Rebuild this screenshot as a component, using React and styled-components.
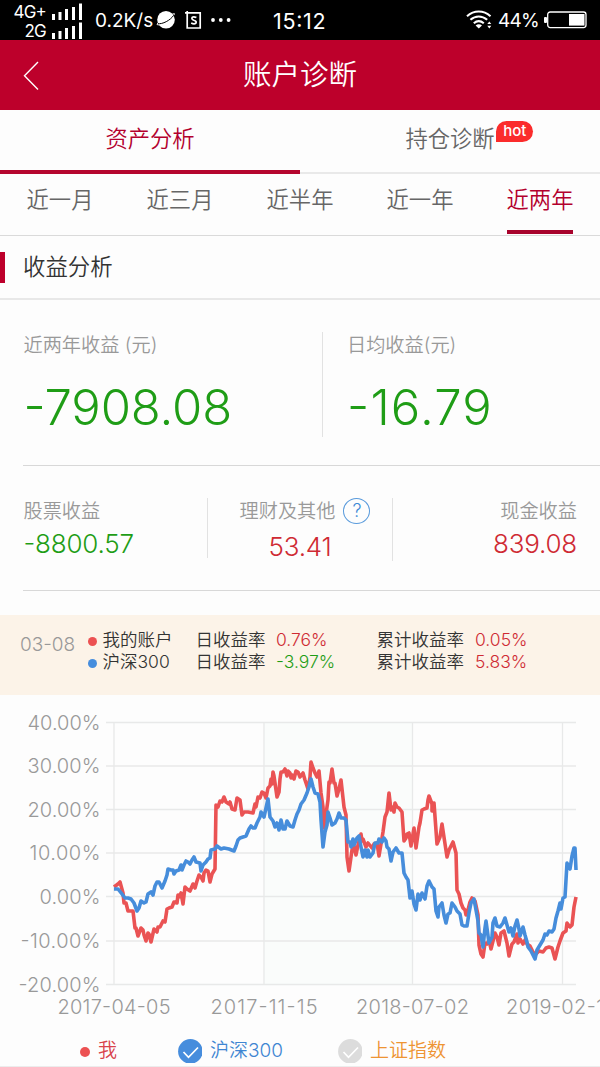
import React from 'react';
import styled, { createGlobalStyle } from 'styled-components';

const GlobalStyle = createGlobalStyle`
  * {
    box-sizing: border-box;
  }

  body {
    margin: 0;
    background: #fdfdfd;
    font-family: Inter, 'Noto Sans CJK SC', sans-serif;
    font-weight: 350;
    font-feature-settings: 'case';
    color: #333;
  }
`;

const GREEN = '#1f9d16';
const RED = '#cf2a33';

const Page = styled.div`
  width: 600px;
  height: 1067px;
  overflow: hidden;
  display: flex;
  flex-direction: column;
  white-space: nowrap;
`;

const StatusBar = styled.header`
  flex: none;
  height: 40px;
  display: grid;
  grid-template-columns: 273px 1fr auto;
  align-items: center;
  padding: 0 13px 0 0;
  background: #000;
  color: #fff;
  font-weight: 400;
`;

const StatusGroup = styled.div`
  display: flex;
  align-items: center;
`;

const StatusIcons = styled(StatusGroup)`
  gap: 9px;
`;

const Signals = styled.div`
  display: flex;
  flex-direction: column;
  width: 82px;
  padding-top: 2px;
`;

const SignalRow = styled.div`
  display: flex;
  justify-content: flex-end;
  align-items: center;
  gap: 6px;
  height: 19px;
  font-size: 17px;
  letter-spacing: -0.8px;
`;

const Speed = styled.span`
  margin: 0 3px 0 13px;
  padding-top: 1px;
  font-size: 19px;
`;

const Clock = styled.span`
  padding-top: 1px;
  font-size: 21.5px;
  letter-spacing: 0.7px;
`;

const Battery = styled.span`
  margin: 0 5px 0 6px;
  padding-top: 1px;
  font-size: 19px;
  letter-spacing: -0.7px;
`;

const TitleBar = styled.div`
  flex: none;
  height: 70px;
  display: grid;
  grid-template-columns: 60px 1fr 60px;
  align-items: center;
  background: #bd002b;
  color: #fff;
`;

const BackIcon = styled.svg`
  margin: 2px 0 0 23px;
`;

const Title = styled.h1`
  margin: 0;
  font-size: 28.5px;
  font-weight: 350;
  line-height: 40px;
  text-align: center;
  padding-bottom: 1px;
`;

const Tabs = styled.nav`
  flex: none;
  display: grid;
  grid-template-columns: 1fr 1fr;
  height: 64px;
`;

const Tab = styled.div`
  display: flex;
  justify-content: center;
  padding-top: 13px;
  font-size: 22.3px;
  line-height: 32px;
  color: ${props => (props.$active ? '#b3002d' : '#666')};
  border-bottom: ${props => (props.$active ? '4px solid #b5062e' : '2px solid #e9e9e9')};
`;

const TabLabel = styled.span`
  position: relative;
`;

const HotBadge = styled.span`
  position: absolute;
  left: 91px;
  top: -2px;
  width: 37px;
  height: 21px;
  border-radius: 11px 11px 11px 0;
  background: #fb2c2c;
  color: #fff;
  font: 500 15px/20px Inter, sans-serif;
  text-align: center;
`;

const Periods = styled.nav`
  flex: none;
  display: grid;
  grid-template-columns: repeat(5, 120px);
  height: 62px;
  border-bottom: 1px solid #dadada;
`;

const Period = styled.div`
  justify-self: center;
  height: 60px;
  padding-top: 10px;
  font-size: 22.3px;
  line-height: 32px;
  color: ${props => (props.$active ? '#b3002d' : '#666')};
  border-bottom: ${props => (props.$active ? '4px solid #a8032c' : '0')};
`;

const SectionTitle = styled.h2`
  flex: none;
  margin: 0;
  display: flex;
  align-items: center;
  gap: 18px;
  height: 64px;
  border-bottom: 2px solid #e8e8e8;
  font-size: 22.4px;
  line-height: 32px;
  font-weight: 350;

  &::before {
    content: '';
    width: 5px;
    height: 31px;
    background: #bd002b;
  }
`;

const Totals = styled.section`
  flex: none;
  display: grid;
  grid-template-columns: 299px 1fr;
  height: 166px;
  margin-left: 23px;
  padding-top: 32px;
  border-bottom: 1px solid #d8d8d8;
`;

const Total = styled.div`
  height: 105px;
  padding-left: ${props => (props.$divided ? '24px' : '0.5px')};
  border-left: ${props => (props.$divided ? '1px solid #e2e2e2' : '0')};
`;

const Label = styled.div`
  display: flex;
  align-items: center;
  font-size: 19.2px;
  line-height: 24px;
  height: 24px;
  padding-top: 2px;
  padding-left: ${props => props.$indent || '0'};
  color: #999;
`;

const TotalValue = styled.div`
  margin-top: 22px;
  font-size: 49px;
  line-height: 60px;
  letter-spacing: ${props => props.$spacing};
  color: ${GREEN};
`;

const Breakdown = styled.section`
  flex: none;
  display: grid;
  grid-template-columns: 185px 185px 1fr;
  height: 125px;
  margin-left: 23px;
  padding-top: 32px;
  border-bottom: 1px solid #d8d8d8;
`;

const Part = styled.div`
  display: flex;
  flex-direction: column;
  align-items: ${props => props.$align || 'flex-start'};
  height: ${props => props.$height || '60px'};
  padding: ${props => props.$padding || '0 0 0 0.5px'};
  border-right: ${props => (props.$last ? '0' : '1px solid #e2e2e2')};
`;

const PartValue = styled.div`
  margin-top: ${props => props.$top || '7px'};
  font-size: 26px;
  line-height: 30px;
  letter-spacing: -0.2px;
  color: ${props => props.color};
`;

const Help = styled.span`
  display: flex;
  align-items: center;
  justify-content: center;
  width: 27px;
  height: 26px;
  margin-left: 8px;
  border: 1px solid #5a9bdc;
  border-radius: 50%;
  font-size: 18px;
  color: #3d8ad6;
`;

const Summary = styled.section`
  flex: none;
  display: grid;
  grid-template-columns: 68px 107.5px 80.5px 100.5px 98.5px 1fr;
  grid-auto-rows: 22px;
  height: 80px;
  margin-top: 24px;
  padding: 14px 0 0 20px;
  background: #fcf3e8;
  font-size: 17.5px;
  line-height: 22px;
`;

const SummaryDate = styled.div`
  grid-row: span 2;
  padding-top: 3px;
  font-size: 19px;
  line-height: 26px;
  color: #999;
`;

const SummaryName = styled.div`
  display: flex;
  align-items: center;
  gap: 5.5px;

  &::before {
    content: '';
    width: 9px;
    height: 9px;
    margin-top: 2px;
    border-radius: 50%;
    background: ${props => props.$dot};
  }
`;

const Rate = styled.div`
  color: ${props => props.color};
`;

const Chart = styled.svg`
  flex: none;
  display: block;
  font-size: 20px;
  fill: #999;
`;

const Legend = styled.div`
  flex: none;
  display: flex;
  align-items: center;
  height: 31px;
  padding-left: 80px;
  font-size: 19px;
  line-height: 28px;
`;

const LegendItem = styled.div`
  display: flex;
  align-items: center;
  gap: 8px;
  width: ${props => props.$width};
  color: ${props => props.color};
`;

const LegendText = styled.span`
  padding-top: 1px;
`;

const Dot = styled.i`
  width: 10px;
  height: 10px;
  margin-top: 3px;
  border-radius: 50%;
  background: #ec5152;
`;

const Footer = styled.div`
  flex: none;
  height: 2px;
  border-top: 1px solid #ececec;
`;

const periods = ['近一月', '近三月', '近半年', '近一年', '近两年'];

const rows = [
  { name: '我的账户', dot: '#ec5152', day: '0.76%', dayColor: RED, total: '0.05%' },
  { name: '沪深300', dot: '#468ddd', day: '-3.97%', dayColor: GREEN, total: '5.83%' },
];

// position, label, label width
const yTicks = [
  [722.5, '40.00%', 73],
  [766, '30.00%', 73],
  [809.5, '20.00%', 73],
  [853, '10.00%', 71],
  [896.5, '0.00%', 61],
  [941, '-10.00%', 80],
  [984.5, '-20.00%', 82],
];

const xTicks = [
  [114, '2017-04-05', 113],
  [264, '2017-11-15', 107],
  [412.5, '2018-07-02', 113],
  [562.5, '2019-02-1', 98],
];

const mine = `114,887 118,884 120,882 123,893 124,903 126,903 128,911 133,911 135,928 136,928 138,936
  141,928 143,930 144,935 146,941 148,933 149,934 151,942 154,929 157,932 158,927 160,927 163,921 165,922
  167,909 169,908 172,907 174,902 177,903 178,895 179,897 181,893 183,904 185,887 187,889 190,891 193,884
  195,888 197,881 199,875 201,877 203,881 204,873 206,870 208,871 210,882 212,874 215,869 216,805 218,807
  220,801 222,802 224,797 226,802 229,804 230,802 232,809 235,810 237,798 240,800 242,815 244,812 248,812
  253,813 255,804 256,807 258,797 260,798 262,792 264,793 266,798 268,788 270,786 271,779 272,784 273,772
  274,776 277,797 279,792 280,779 281,772 283,772 285,769 287,776 288,771 290,773 291,778 292,775 294,779
  296,771 298,772 300,777 303,773 305,780 308,789 310,777 311,762 313,768 315,773 317,777 319,771 321,793
  323,807 324,828 328,800 329,782 330,783 332,769 334,783 335,783 337,796 339,789 341,780 344,807 346,815
  347,857 349,871 352,850 354,846 356,855 358,845 361,834 362,841 363,839 366,847 368,843 372,848 374,844
  377,843 379,856 382,838 383,832 385,817 387,812 389,793 391,810 392,807 394,812 395,803 397,807 399,808
  402,812 404,841 406,838 407,834 409,833 411,846 414,828 416,848 419,827 420,823 422,810 424,809 427,808
  428,800 429,796 432,804 432,811 434,803 437,844 440,837 442,824 447,857 449,850 453,842 456,853 457,890
  459,894 461,903 463,908 465,910 466,915 468,910 470,902 472,898 475,901 478,915 479,945 481,954 483,957
  485,943 487,944 489,940 491,949 493,941 495,933 497,937 499,945 501,933 504,931 507,943 509,956 512,944
  514,942 517,934 518,943 520,939 523,944 525,940 527,944 530,946 533,952 535,955 539,951 543,952 546,948
  549,947 552,948 555,959 558,947 560,941 563,933 566,931 567,923 570,927 572,925 574,907 576,897`;

const index300 = `114,889 118,889 122,894 125,898 128,898 131,899 134,903 137,911 139,908 141,901 144,903
  146,902 148,894 151,892 153,895 155,886 157,882 159,882 162,888 165,881 167,875 168,869 171,870 173,870
  174,874 176,871 179,870 181,865 182,870 184,865 186,861 188,862 190,864 192,860 194,857 196,862 200,863
  201,871 203,865 206,862 208,859 210,858 211,850 215,849 217,846 221,849 224,848 229,849 234,851 236,846
  238,840 240,838 243,837 246,836 249,829 251,826 253,828 255,828 257,823 260,817 261,812 264,817 266,808
  268,799 270,817 273,821 275,827 277,823 279,830 281,820 283,829 285,829 287,821 290,826 293,827 295,820
  297,814 299,810 301,804 304,800 307,793 309,787 311,779 313,787 315,793 318,794 320,802 321,820 323,847
  325,832 327,825 328,812 330,818 332,825 335,823 337,819 339,813 341,818 344,818 346,820 348,842 350,842
  351,847 353,839 354,845 357,838 359,836 361,847 363,857 365,850 367,857 368,850 370,857 373,853 375,843
  378,843 379,839 382,842 384,838 386,841 387,847 389,849 391,861 393,852 396,848 399,853 402,853 404,873
  406,877 408,880 410,898 412,891 414,904 416,910 418,894 420,900 422,893 425,899 427,886 429,881 432,887
  434,889 436,911 438,917 439,907 442,903 444,915 446,923 448,914 450,913 452,903 455,907 457,911 460,914
  462,925 464,926 467,926 469,913 471,903 474,899 476,910 478,921 479,933 481,935 483,947 485,928 486,921
  489,943 492,937 493,923 495,918 497,926 500,927 503,923 505,918 507,925 509,932 511,928 513,936 515,926
  517,920 519,929 520,936 523,927 525,935 527,942 528,947 531,951 535,959 537,950 540,945 543,940 545,934
  547,935 549,931 552,932 554,929 556,918 558,911 560,903 561,909 563,898 565,897 567,863 570,869 572,856
  574,848 575,848 576,870`;

const SignalBars = () => (
  <svg width="30" height="17" viewBox="0 0 30 17" fill="#fff">
    <rect x="0" y="11" width="3" height="6" />
    <rect x="6.5" y="9" width="3" height="8" />
    <rect x="13" y="6" width="3" height="11" />
    <rect x="20" y="4" width="3" height="13" />
    <rect x="27" y="0.5" width="3" height="16.5" />
  </svg>
);

const PlanetIcon = () => (
  <svg width="20" height="20" viewBox="0 0 20 20">
    <circle cx="10" cy="9.8" r="8.8" fill="#fff" />
    <path d="M1.4 13.6C6.5 14.6 14.5 10.2 17.8 5.2" fill="none" stroke="#000" strokeWidth="1" />
    <path d="M1.8 13L1 14.6L3.4 15M16.6 4L18.4 3.6L18 5.2" fill="none" stroke="#fff" strokeWidth="0.9" />
  </svg>
);

const FrameIcon = () => (
  <svg width="17" height="20" viewBox="0 0 17 20" fill="none" stroke="#fff" strokeWidth="1.7">
    <path d="M0 2.8H15.2V18H2.2V1" />
    <path d="M11.4 7.6Q8.8 6.4 7.3 7.3Q6 9.2 8.8 10.2Q12.2 11.2 10.8 13.3Q9 14.5 6.2 13" />
  </svg>
);

const MoreIcon = () => (
  <svg width="20" height="4" viewBox="0 0 20 4" fill="#fff">
    <circle cx="2" cy="2" r="1.9" />
    <circle cx="9.8" cy="2" r="1.9" />
    <circle cx="17.6" cy="2" r="1.9" />
  </svg>
);

const WifiIcon = () => (
  <svg width="26" height="20" viewBox="0 0 26 20" fill="none" stroke="#fff" strokeWidth="2.1">
    <path d="M1 6.2C8 0 17.5 0 24.5 6.2" />
    <path d="M4.4 9.8C9.5 5.3 16 5.3 21.2 9.8" />
    <path d="M7.8 13.2C11 10.4 14.5 10.4 17.8 13.2" />
    <path d="M9.6 15.4C11.5 13.8 14 13.8 16 15.4L12.8 18.6Z" fill="#fff" stroke="none" />
    <path d="M21.3 14L23.3 11.6L25.3 14ZM21.3 15.8L23.3 18.4L25.3 15.8Z" fill="#fff" stroke="none" />
  </svg>
);

const BatteryIcon = () => (
  <svg width="43" height="18" viewBox="0 0 43 18">
    <rect x="0" y="6" width="3" height="6" rx="1" fill="#fff" />
    <rect x="3.7" y="1" width="38.3" height="15.6" rx="2.5" fill="none" stroke="#fff" strokeWidth="1.3" />
    <rect x="25" y="3" width="15.5" height="11.6" fill="#fff" />
  </svg>
);

const CheckIcon = ({ fill }) => (
  <svg width="24" height="24" viewBox="0 0 24 24">
    <circle cx="12.4" cy="12.4" r="12.3" fill={fill} />
    <path d="M5.5 13L10.5 18.3L20 8.5" fill="none" stroke="#fff" strokeWidth="1.7" />
  </svg>
);

const ReturnChart = () => (
  <Chart width="600" height="340" viewBox="0 695 600 340">
    <rect x="264" y="722" width="149" height="262" fill="#fafcfb" />
    <g stroke="#e8e9e9" strokeWidth="1.3">
      {yTicks.map(([y]) => (
        <line key={y} x1="106" x2="576" y1={y} y2={y} />
      ))}
      {xTicks.map(([x]) => (
        <line key={x} x1={x} x2={x} y1="722" y2="984" />
      ))}
    </g>
    {yTicks.map(([y, label, width]) => (
      <text key={label} x={100.5 - width} y={y + 7} textLength={width}>
        {label}
      </text>
    ))}
    {xTicks.map(([x, label, width]) => (
      <text key={label} x={Math.min(x - width / 2, 506)} y="1014" textLength={width}>
        {label}
      </text>
    ))}
    <g fill="none" strokeWidth="3.6" strokeLinejoin="round">
      <polyline points={mine} stroke="#ea5354" />
      <polyline points={index300} stroke="#468ddb" />
    </g>
  </Chart>
);

const App = () => (
  <Page>
    <GlobalStyle />
    <StatusBar>
      <StatusGroup>
        <Signals>
          <SignalRow>4G+ <SignalBars /></SignalRow>
          <SignalRow>2G <SignalBars /></SignalRow>
        </Signals>
        <Speed>0.2K/s</Speed>
        <StatusIcons>
          <PlanetIcon />
          <FrameIcon />
          <MoreIcon />
        </StatusIcons>
      </StatusGroup>
      <Clock>15:12</Clock>
      <StatusGroup>
        <WifiIcon />
        <Battery>44%</Battery>
        <BatteryIcon />
      </StatusGroup>
    </StatusBar>

    <TitleBar>
      <BackIcon width="16" height="30" viewBox="0 0 16 30">
        <path d="M15 1L1.5 14.8L15 28.5" fill="none" stroke="#fff" strokeWidth="1.4" />
      </BackIcon>
      <Title>账户诊断</Title>
    </TitleBar>

    <Tabs>
      <Tab $active>资产分析</Tab>
      <Tab>
        <TabLabel>
          持仓诊断
          <HotBadge>hot</HotBadge>
        </TabLabel>
      </Tab>
    </Tabs>

    <Periods>
      {periods.map(name => (
        <Period key={name} $active={name === '近两年'}>{name}</Period>
      ))}
    </Periods>

    <SectionTitle>收益分析</SectionTitle>

    <Totals>
      <Total>
        <Label>近两年收益 (元)</Label>
        <TotalValue $spacing="-0.1px">-7908.08</TotalValue>
      </Total>
      <Total $divided>
        <Label>日均收益(元)</Label>
        <TotalValue $spacing="1.2px">-16.79</TotalValue>
      </Total>
    </Totals>

    <Breakdown>
      <Part>
        <Label>股票收益</Label>
        <PartValue color={GREEN}>-8800.57</PartValue>
      </Part>
      <Part $align="center" $height="63px" $padding="0">
        <Label $indent="10px">理财及其他<Help>?</Help></Label>
        <PartValue color={RED} $top="10px">53.41</PartValue>
      </Part>
      <Part $align="flex-end" $padding="0 23px 0 0" $last>
        <Label>现金收益</Label>
        <PartValue color={RED}>839.08</PartValue>
      </Part>
    </Breakdown>

    <Summary>
      <SummaryDate>03-08</SummaryDate>
      {rows.map(row => (
        <React.Fragment key={row.name}>
          <SummaryName $dot={row.dot}>{row.name}</SummaryName>
          <span>日收益率</span>
          <Rate color={row.dayColor}>{row.day}</Rate>
          <span>累计收益率</span>
          <Rate color={RED}>{row.total}</Rate>
        </React.Fragment>
      ))}
    </Summary>

    <ReturnChart />

    <Legend>
      <LegendItem color="#d9434b" $width="98px">
        <Dot />
        <LegendText>我</LegendText>
      </LegendItem>
      <LegendItem color="#3f86d2" $width="160px">
        <CheckIcon fill="#468ddd" />
        <LegendText>沪深300</LegendText>
      </LegendItem>
      <LegendItem color="#ee9433">
        <CheckIcon fill="#dcdcdc" />
        <LegendText>上证指数</LegendText>
      </LegendItem>
    </Legend>
    <Footer />
  </Page>
);

export default App;
